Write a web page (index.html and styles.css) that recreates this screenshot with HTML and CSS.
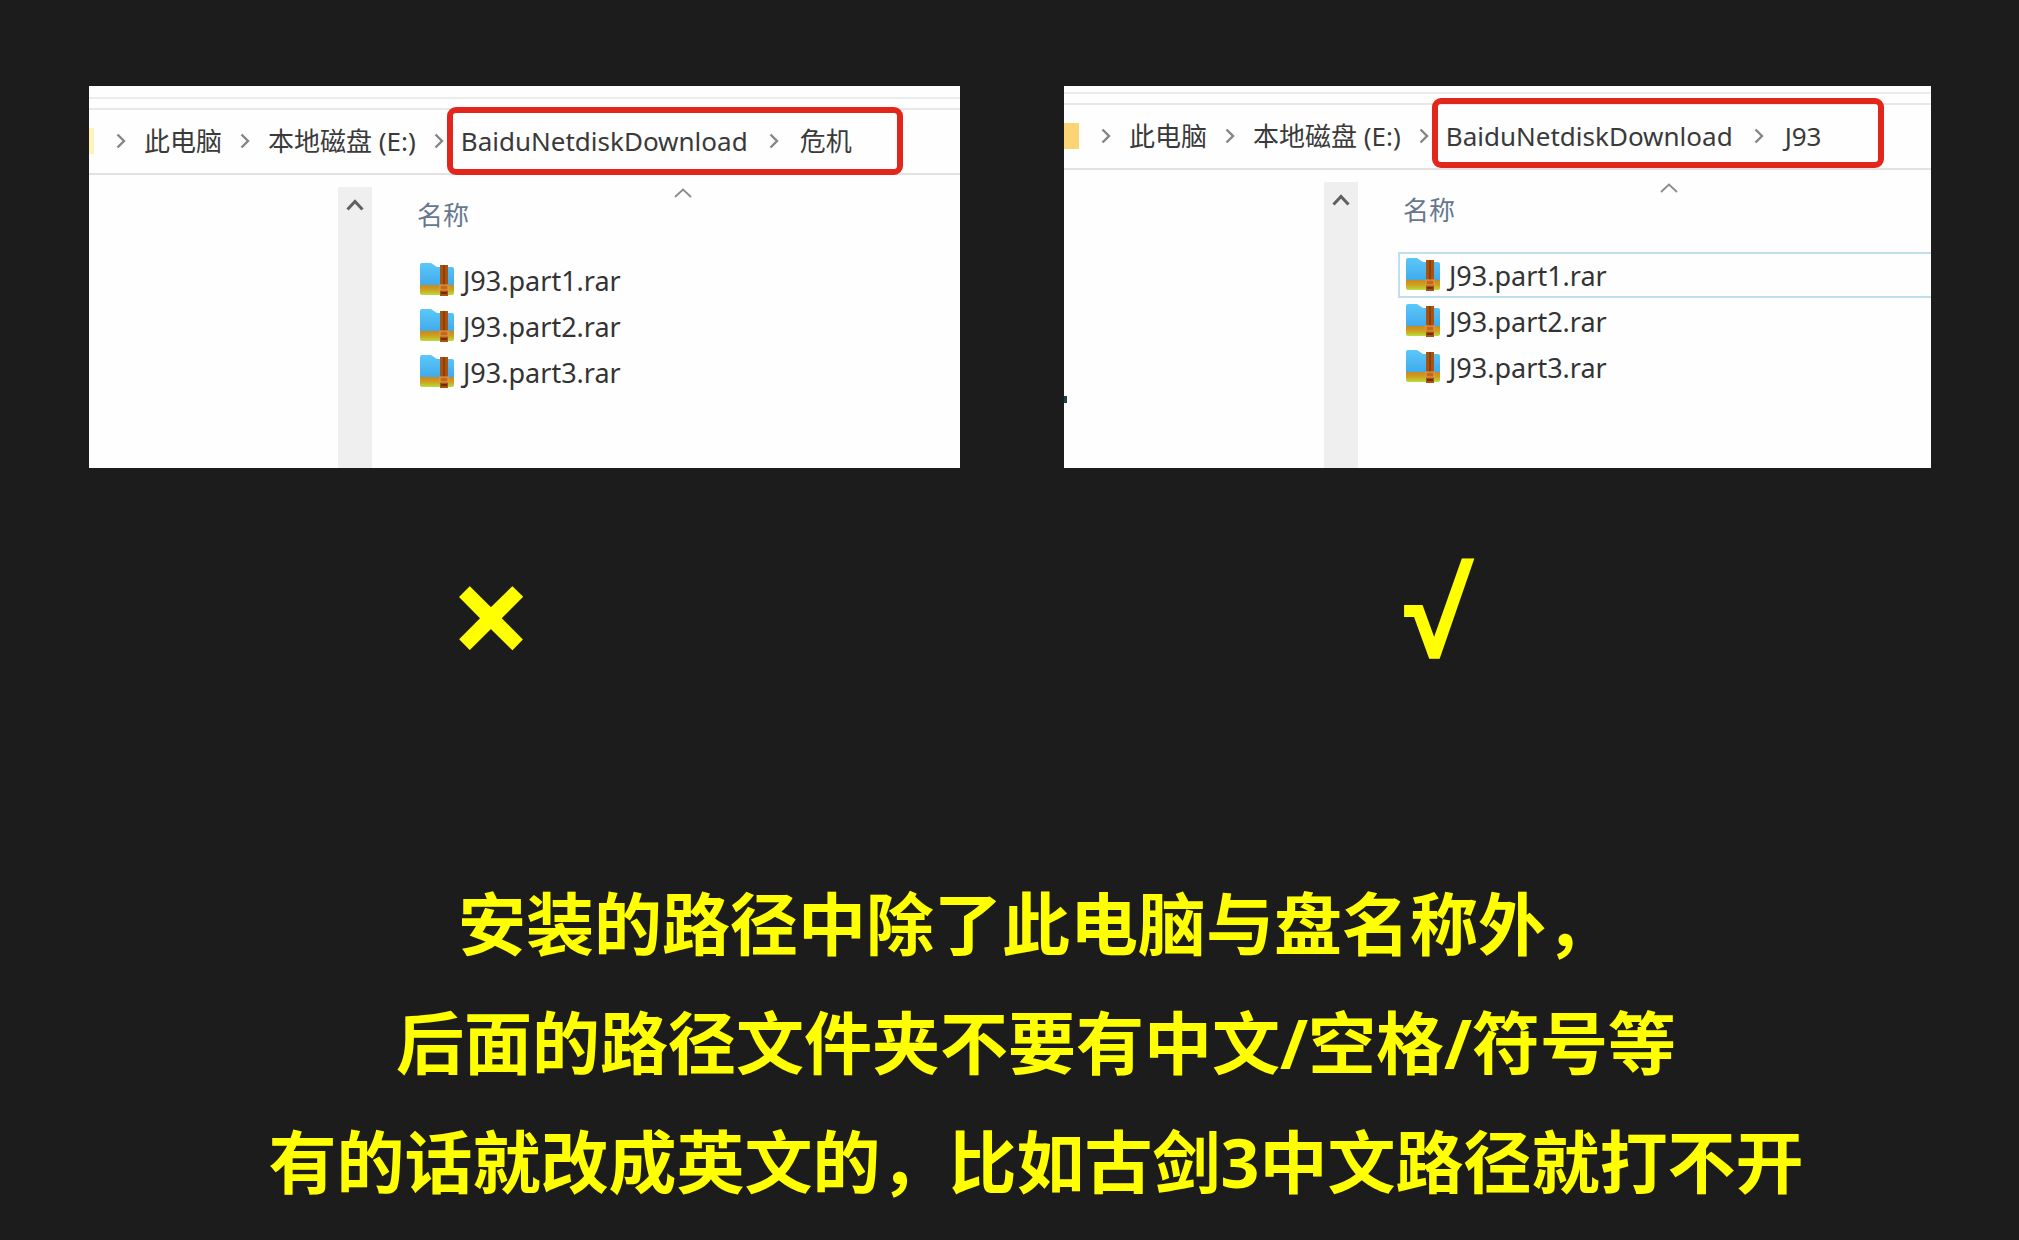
FILE: index.html
```
<!DOCTYPE html>
<html lang="zh-CN">
<head>
  <meta charset="utf-8">
  <title>安装路径说明</title>
  <link rel="stylesheet" href="styles.css">
</head>
<body>

  <!-- shared icons -->
  <svg class="sprite" aria-hidden="true">
    <defs>
      <linearGradient id="blue" x1="0" y1="0" x2="0" y2="1">
        <stop offset="0" stop-color="#5cc8f8"/>
        <stop offset="1" stop-color="#3fa9ec"/>
      </linearGradient>
      <linearGradient id="base" x1="0" y1="0" x2="0" y2="1">
        <stop offset="0" stop-color="#c98a1c"/>
        <stop offset="0.5" stop-color="#d0a020"/>
        <stop offset="1" stop-color="#b4e03c"/>
      </linearGradient>
    </defs>
    <symbol id="chevron" viewBox="0 0 10 16">
      <path d="M1.5 1.5L8 8L1.5 14.5" fill="none" stroke="#858585" stroke-width="2.4"/>
    </symbol>
    <symbol id="rar" viewBox="0 0 36 36">
      <path d="M1 3Q1 1 3 1H12L18 5H33Q35 5 35 7V24H1Z" fill="url(#blue)"/>
      <path d="M1 23H35V31Q35 33 33 33H3Q1 33 1 31Z" fill="url(#base)"/>
      <rect x="21" y="3" width="8" height="31" fill="#a9530f"/>
      <rect x="24" y="3" width="2" height="20" fill="#8a400a"/>
      <rect x="21" y="23" width="8" height="5" fill="#c4691a" stroke="#e8a050" stroke-width="1"/>
      <rect x="22" y="30" width="6" height="2" fill="#6e2c08"/>
    </symbol>
  </svg>

  <main>
    <div class="compare">

      <section class="window wrong">
        <div class="topline"></div>
        <nav class="path">
          <span class="folder"></span>
          <svg class="chevron"><use href="#chevron"/></svg>
          <a href="#">此电脑</a>
          <svg class="chevron"><use href="#chevron"/></svg>
          <a href="#">本地磁盘 (E:)</a>
          <svg class="chevron"><use href="#chevron"/></svg>
          <div class="highlight">
            <a href="#">BaiduNetdiskDownload</a>
            <svg class="chevron"><use href="#chevron"/></svg>
            <a href="#">危机</a>
          </div>
        </nav>
        <div class="content">
          <div class="tree"></div>
          <div class="scrollbar">
            <button type="button" aria-label="向上滚动">
              <svg viewBox="0 0 18 14"><path d="M1.5 11.5L9 3.5L16.5 11.5" fill="none" stroke="#606060" stroke-width="3"/></svg>
            </button>
          </div>
          <table class="files">
            <thead>
              <tr><th>名称<svg class="sort" viewBox="0 0 18 10"><path d="M1 9L9 1.5L17 9" fill="none" stroke="#8c8c8c" stroke-width="1.8"/></svg></th></tr>
            </thead>
            <tbody>
              <tr><td><div class="file"><svg><use href="#rar"/></svg>J93.part1.rar</div></td></tr>
              <tr><td><div class="file"><svg><use href="#rar"/></svg>J93.part2.rar</div></td></tr>
              <tr><td><div class="file"><svg><use href="#rar"/></svg>J93.part3.rar</div></td></tr>
            </tbody>
          </table>
        </div>
      </section>

      <section class="window right">
        <div class="topline"></div>
        <nav class="path">
          <span class="folder"></span>
          <svg class="chevron"><use href="#chevron"/></svg>
          <a href="#">此电脑</a>
          <svg class="chevron"><use href="#chevron"/></svg>
          <a href="#">本地磁盘 (E:)</a>
          <svg class="chevron"><use href="#chevron"/></svg>
          <div class="highlight">
            <a href="#">BaiduNetdiskDownload</a>
            <svg class="chevron"><use href="#chevron"/></svg>
            <a href="#">J93</a>
          </div>
        </nav>
        <div class="content">
          <div class="tree"><span class="speck"></span></div>
          <div class="scrollbar">
            <button type="button" aria-label="向上滚动">
              <svg viewBox="0 0 18 14"><path d="M1.5 11.5L9 3.5L16.5 11.5" fill="none" stroke="#606060" stroke-width="3"/></svg>
            </button>
          </div>
          <table class="files">
            <thead>
              <tr><th>名称<svg class="sort" viewBox="0 0 18 10"><path d="M1 9L9 1.5L17 9" fill="none" stroke="#8c8c8c" stroke-width="1.8"/></svg></th></tr>
            </thead>
            <tbody>
              <tr><td><div class="file selected"><svg><use href="#rar"/></svg>J93.part1.rar</div></td></tr>
              <tr><td><div class="file"><svg><use href="#rar"/></svg>J93.part2.rar</div></td></tr>
              <tr><td><div class="file"><svg><use href="#rar"/></svg>J93.part3.rar</div></td></tr>
            </tbody>
          </table>
        </div>
      </section>

      <div class="mark cross">×</div>
      <div class="mark check">√</div>
    </div>

    <p class="notice">
      安装的路径中除了此电脑与盘名称外，<br>
      后面的路径文件夹不要有中文/空格/符号等<br>
      有的话就改成英文的，比如古剑3中文路径就打不开
    </p>
  </main>

</body>
</html>
```
FILE: styles.css
```
* {
  box-sizing: border-box;
}

body {
  margin: 0;
  min-height: 100vh;
  background-color: #1c1c1c;
  color: #333;
  font-family: "Noto Sans", "Noto Sans CJK SC", sans-serif;
  font-size: 26px;
}

.sprite {
  position: absolute;
  width: 0;
  height: 0;
}

main {
  padding: 86px 88px 0 89px;
}

.compare {
  display: grid;
  grid-template-columns: 871fr 867fr;
  column-gap: 104px;
}

/* explorer window */
.window {
  display: flex;
  flex-direction: column;
  min-height: 382px;
  background-color: #fefefe;
}

.topline {
  height: 13px;
  border-bottom: 2px solid #ececec;
}

.right .topline {
  height: 8px;
}

.path {
  display: flex;
  align-items: center;
  gap: 18px;
  height: 76px;
  padding-top: 10px;
  border-bottom: 2px solid #e2e2e2;
  background: linear-gradient(#e8e8e8, #e8e8e8) 0 9px / 100% 2px no-repeat;
  line-height: 36px;
  white-space: nowrap;
}

.path a {
  color: #3a3a3a;
  text-decoration: none;
}

.folder {
  width: 5px;
  height: 26px;
  margin-right: 4px;
  background-color: #fdf3b8;
}

.right .folder {
  width: 15px;
  background-color: #fbd574;
}

.chevron {
  flex: none;
  width: 10px;
  height: 16px;
}

.highlight {
  display: flex;
  flex: none;
  align-items: center;
  gap: 21px;
  width: 456px;
  height: 68px;
  margin-left: -15px;
  padding-left: 8px;
  border: 6px solid #e3261c;
  border-radius: 9px;
}

.right .highlight {
  width: 452px;
  height: 70px;
  margin-top: -6px;
  padding-top: 6px;
}

.content {
  display: flex;
  flex: 1;
}

.tree {
  position: relative;
  width: 249px;
}

.right .tree {
  width: 260px;
}

/* cut-off label at the window edge */
.speck {
  position: absolute;
  left: 0;
  top: 226px;
  width: 3px;
  height: 7px;
  background-color: #17404a;
}

.scrollbar {
  width: 34px;
  margin-top: 12px;
  background-color: #efefef;
}

.scrollbar button {
  display: block;
  width: 100%;
  height: 36px;
  padding: 0 8px;
  border: none;
  background: none;
}

.scrollbar svg {
  display: block;
  width: 18px;
  height: 14px;
}

.files {
  flex: 1;
  align-self: flex-start;
  margin-left: 40px;
  border-collapse: collapse;
}

.files th {
  position: relative;
  height: 82px;
  padding: 0 0 4px 5px;
  color: #66788f;
  font-weight: normal;
  text-align: left;
}

.sort {
  position: absolute;
  left: 262px;
  top: 13px;
  width: 18px;
  height: 10px;
}

.files td {
  padding: 0;
}

.file {
  display: flex;
  align-items: center;
  gap: 8px;
  height: 46px;
  padding-left: 7px;
  font-size: 27px;
}

.file svg {
  width: 36px;
  height: 36px;
}

.selected {
  padding-left: 5px;
  border: 2px solid #bfdfee;
  border-right: none;
}

/* marks and notice */
.mark {
  height: 290px;
  padding-top: 55px;
  color: #ffff00;
  font-family: "Open Sans", "Noto Sans CJK SC", sans-serif;
  font-weight: bold;
  line-height: 180px;
}

.cross {
  padding-left: 361px;
  font-size: 144px;
}

.check {
  padding-left: 338px;
  font-size: 116px;
}

.notice {
  margin: 106px 0 0 52px;
  color: #ffff00;
  font-family: "Open Sans", "Noto Sans CJK SC", sans-serif;
  font-size: 68px;
  font-weight: bold;
  line-height: 119px;
  text-align: center;
  white-space: nowrap;
}
```
